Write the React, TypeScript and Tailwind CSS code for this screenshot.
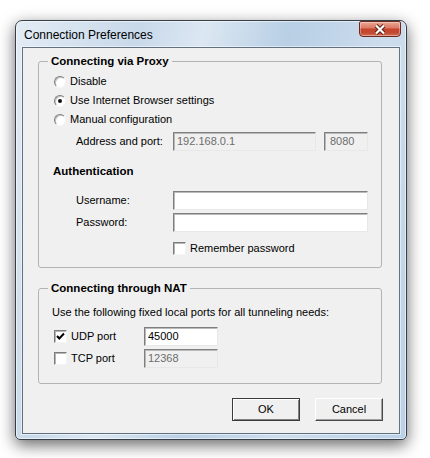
const sunken =
  "flex h-[19px] items-center border border-t-[#7f7f7f] border-l-[#7f7f7f] border-b-[#e8e8e8] border-r-[#e8e8e8] pl-[3px] shadow-[inset_1px_1px_0_#b9b9b9]";

function Radio({ checked }: { checked?: boolean }) {
  return (
    <span className="flex h-[12px] w-[12px] shrink-0 items-center justify-center rounded-full border border-t-[#7c7c7c] border-l-[#7c7c7c] border-b-[#f6f6f6] border-r-[#f6f6f6] bg-white shadow-[inset_1px_1px_0_#c4c4c4]">
      {checked && <span className="h-[4px] w-[4px] rounded-full bg-[#111]" />}
    </span>
  );
}

function Check({ checked }: { checked?: boolean }) {
  return (
    <span className="flex h-[13px] w-[13px] shrink-0 items-center justify-center border border-t-[#7c7c7c] border-l-[#7c7c7c] border-b-[#f4f4f4] border-r-[#f4f4f4] bg-white shadow-[inset_1px_1px_0_#b5b5b5]">
      {checked && (
        <svg width="9" height="9" viewBox="0 0 9 9">
          <path d="M1 4 L3.3 6.5 L8 1.5" fill="none" stroke="#000" strokeWidth="2" />
        </svg>
      )}
    </span>
  );
}

function Group({ title, className, children }: { title: string; className: string; children: React.ReactNode }) {
  return (
    <div className={"relative w-[344px] rounded-[3px] border border-[#b4b4b4] " + className}>
      <span className="absolute -top-[8px] left-[9px] bg-[#f0f0f0] px-[3px] text-[11.5px] leading-[14px] font-bold">
        {title}
      </span>
      {children}
    </div>
  );
}

function Btn({ label, primary }: { label: string; primary?: boolean }) {
  return (
    <div
      className={
        primary
          ? "flex h-[23px] w-[68px] items-center justify-center border border-[#3c3c3c] bg-[#f0f0f0] shadow-[inset_1px_1px_0_#ffffff,inset_-1px_-1px_0_#808080]"
          : "flex h-[23px] w-[68px] items-center justify-center border border-t-white border-l-white border-b-[#4a4a4a] border-r-[#4a4a4a] bg-[#f0f0f0] shadow-[inset_-1px_-1px_0_#a0a0a0]"
      }
    >
      {label}
    </div>
  );
}

export default function App() {
  return (
    <div className="h-[458px] w-[430px] bg-white pl-[15px] pt-[20px] font-['Liberation_Sans',Arial,sans-serif] text-[11px] leading-[13px] text-black">
      <div className="flex h-[420px] w-[392px] flex-col rounded-t-[7px] rounded-b-[5px] border border-[#363f48] bg-[linear-gradient(105deg,#e3ecf5_0%,#c8d9ea_25%,#dce7f2_38%,#b8cfe5_55%,#cddded_75%,#b9d1e7_100%)] px-[6px] shadow-[inset_0_0_0_1px_rgba(255,255,255,0.55),0_5px_16px_rgba(0,0,0,0.6)]">
        <div className="flex h-[26px] items-start justify-between">
          <span className="pl-[2px] pt-[7px] text-[12px] leading-[14px] text-black">Connection Preferences</span>
          <div className="mr-[-1px] flex h-[16px] w-[42px] items-center justify-center rounded-b-[4px] rounded-t-[2px] border border-[#6a2a20] bg-[linear-gradient(#eba694_0%,#dc7c67_40%,#c7432b_52%,#c24c34_80%,#d9765d_100%)] shadow-[inset_0_0_0_1px_rgba(255,255,255,0.35)]">
            <svg width="14" height="11" viewBox="0 0 14 11">
              <path d="M3 1.5 L11 9.5 M11 1.5 L3 9.5" stroke="#5a1d14" strokeWidth="4" />
              <path d="M3 1.5 L11 9.5 M11 1.5 L3 9.5" stroke="#fff" strokeWidth="2.2" />
            </svg>
          </div>
        </div>

        <div className="flex h-[387px] flex-col border border-[#62717f] bg-[#f0f0f0] px-[15px] pt-[13px] shadow-[0_0_0_1px_rgba(255,255,255,0.5)]">
          <Group title="Connecting via Proxy" className="h-[207px] pl-[15px] pt-[10px]">
            <div className="flex h-[19px] items-center gap-[4px]">
              <Radio />
              <span>Disable</span>
            </div>
            <div className="flex h-[19px] items-center gap-[4px]">
              <Radio checked />
              <span>Use Internet Browser settings</span>
            </div>
            <div className="flex h-[19px] items-center gap-[4px]">
              <Radio />
              <span>Manual configuration</span>
            </div>
            <div className="mt-[3px] flex h-[19px] items-center pl-[22px]">
              <span className="w-[97px]">Address and port:</span>
              <div className={sunken + " w-[143px] bg-[#f0f0f0] text-[#6d6d6d]"}>192.168.0.1</div>
              <div className={sunken + " ml-[8px] w-[44px] bg-[#f0f0f0] pl-[5px] text-[#6d6d6d]"}>8080</div>
            </div>

            <div className="mt-[11px] flex h-[19px] items-center text-[11.5px] font-bold -ml-[1px]">Authentication</div>

            <div className="mt-[10px] flex h-[19px] items-center pl-[22px]">
              <span className="w-[97px]">Username:</span>
              <div className={sunken + " w-[195px] bg-white"} />
            </div>
            <div className="mt-[3px] flex h-[19px] items-center pl-[22px]">
              <span className="w-[97px]">Password:</span>
              <div className={sunken + " w-[195px] bg-white"} />
            </div>
            <div className="mt-[7px] flex h-[19px] items-center gap-[4px] pl-[119px]">
              <Check />
              <span>Remember password</span>
            </div>
          </Group>

          <Group title="Connecting through NAT" className="mt-[20px] h-[96px] pl-[13px] pt-[14px]">
            <div className="flex h-[19px] items-center">Use the following fixed local ports for all tunneling needs:</div>
            <div className="mt-[5px] flex h-[19px] items-center pl-[2px]">
              <div className="flex w-[90px] items-center gap-[4px]">
                <Check checked />
                <span>UDP port</span>
              </div>
              <div className={sunken + " w-[74px] bg-white"}>45000</div>
            </div>
            <div className="mt-[3px] flex h-[19px] items-center pl-[2px]">
              <div className="flex w-[90px] items-center gap-[4px]">
                <Check />
                <span>TCP port</span>
              </div>
              <div className={sunken + " w-[74px] bg-[#f0f0f0] text-[#6d6d6d]"}>12368</div>
            </div>
          </Group>

          <div className="mt-[14px] flex justify-end gap-[15px] pr-[1px]">
            <Btn label="OK" primary />
            <Btn label="Cancel" />
          </div>
        </div>
      </div>
    </div>
  );
}
